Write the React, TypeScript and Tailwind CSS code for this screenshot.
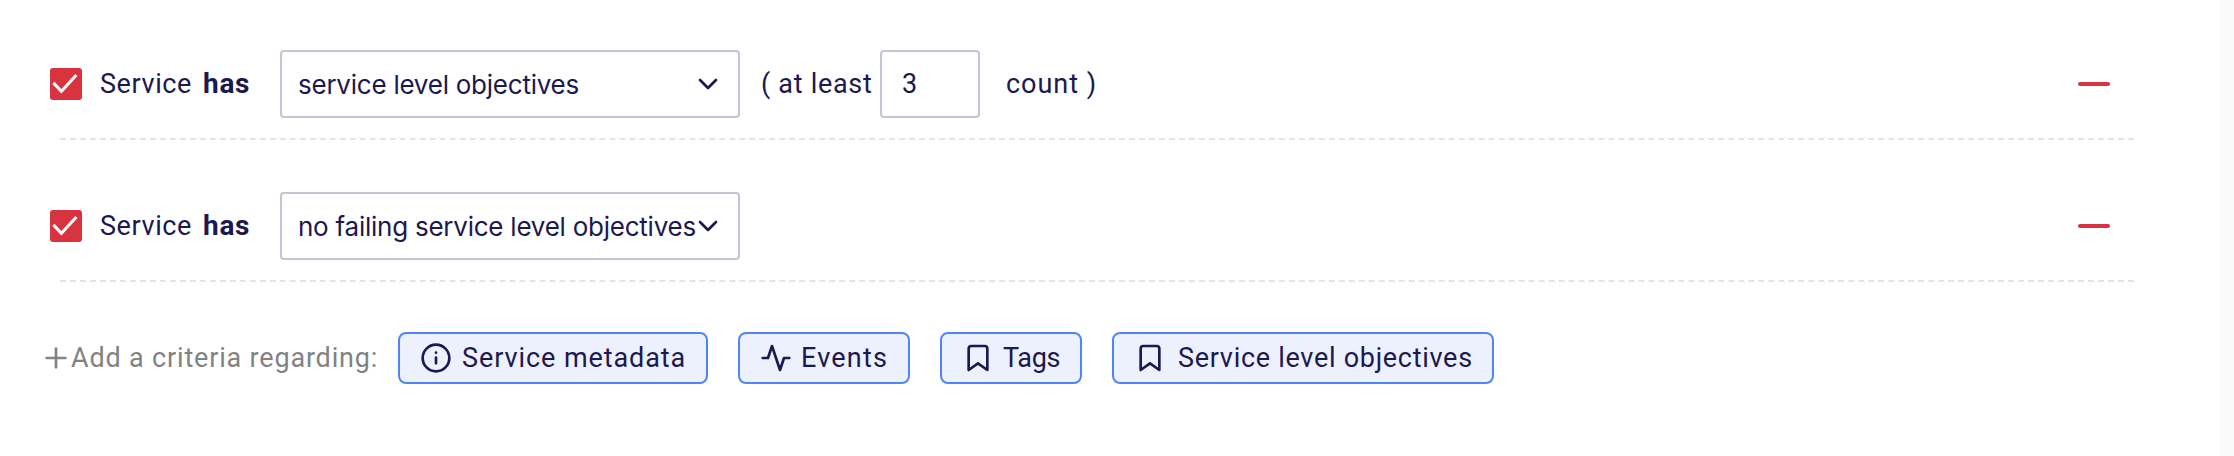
import type { ReactNode } from "react";

function Icon({ children, className = "" }: { children: ReactNode; className?: string }) {
  return (
    <svg viewBox="0 0 24 24" fill="none" stroke="currentColor" strokeWidth={2} strokeLinecap="round" strokeLinejoin="round" className={`size-8 shrink-0 ${className}`}>
      {children}
    </svg>
  );
}

const PlusIcon = () => <Icon><path d="M12 5v14M5 12h14" /></Icon>;
const ChevronIcon = () => <Icon className="-ml-8"><path d="m6 9 6 6 6-6" /></Icon>;
const InfoIcon = () => <Icon><circle cx="12" cy="12" r="10" /><path d="M12 16v-4.3M12 8h.01" /></Icon>;
const ActivityIcon = () => <Icon><path d="M22 12h-4l-3 9L9 3l-3 9H2" /></Icon>;
const BookmarkIcon = () => <Icon><path d="m19 21-7-5-7 5V5a2 2 0 0 1 2-2h10a2 2 0 0 1 2 2z" /></Icon>;

function Checkbox() {
  return (
    <span role="checkbox" aria-checked="true" className="size-8 shrink-0 rounded-[3px] bg-[#d73440]">
      <svg viewBox="0 0 32 32" fill="none" stroke="#fff" strokeWidth={3} className="size-8">
        <path d="M3.4 14.9 11.4 23.2 26.4 7.1" />
      </svg>
    </span>
  );
}

function Select({ value }: { value: string }) {
  return (
    <div className="flex h-[68px] w-[460px] shrink-0 items-center justify-between rounded-[4px] border-2 border-[#c6c3d6] pl-4 pr-3.5">
      <span className="pt-0.5 font-['Inter',sans-serif] text-[26px] tracking-[-0.24px]">{value}</span>
      <ChevronIcon />
    </div>
  );
}

function CriteriaRow({ value, children }: { value: string; children?: ReactNode }) {
  return (
    <div className="flex h-[142px] flex-col">
      <div className="flex h-[120px] items-end pl-[50px] pr-[110px]">
        <div className="flex h-[68px] w-full items-center">
          <Checkbox />
          <span className="ml-[18px] w-[102px] pb-px tracking-[0.59px]">Service</span>
          <b className="w-[78px] pb-px pl-px text-[28px] font-bold tracking-[0.7px]">has</b>
          <Select value={value} />
          {children}
          <span className="ml-auto h-1 w-8 rounded-full bg-[#d73440]" />
        </div>
      </div>
      <div className="ml-[60px] mr-[86px] mt-5 border-t-2 border-dashed border-[#e5e5e5]" />
    </div>
  );
}

function Chip({ icon, label, className }: { icon: ReactNode; label: string; className: string }) {
  return (
    <button className={`flex h-[52px] shrink-0 items-center rounded-lg border-2 border-[#4f86f7] bg-[#edf1fe] pl-5 text-[#1c1850] ${className}`}>
      {icon}
      <span className="pb-px">{label}</span>
    </button>
  );
}

export default function App() {
  return (
    <div className="flex h-[456px] w-[2234px] overflow-hidden whitespace-nowrap bg-[#fafafa] font-['Roboto',sans-serif] text-[27px] leading-[32px] text-[#1c1850]">
      <main className="w-[2220px] bg-white">
        <div className="-mt-0.5">
          <CriteriaRow value="service level objectives">
            <span className="ml-[21px] w-[119px] pb-px tracking-[0.7px]">( at least</span>
            <span className="flex h-[68px] w-[100px] items-center rounded-[4px] border-2 border-[#c6c3d6] pb-px pl-5">3</span>
            <span className="ml-[26px] pb-px tracking-[0.98px]">count )</span>
          </CriteriaRow>
          <CriteriaRow value="no failing service level objectives" />
        </div>
        <div className="mt-[50px] flex h-[52px] items-center pl-10">
          <span className="flex w-[358px] items-center text-[#828282]">
            <PlusIcon />
            <span className="-ml-px pb-px tracking-[0.82px]">Add a criteria regarding:</span>
          </span>
          <div className="flex gap-[30px]">
            <Chip icon={<InfoIcon />} label="Service metadata" className="w-[310px] gap-2.5 tracking-[0.92px]" />
            <Chip icon={<ActivityIcon />} label="Events" className="w-[172px] gap-[9px] tracking-[1.2px]" />
            <Chip icon={<BookmarkIcon />} label="Tags" className="w-[142px] gap-[9px] tracking-[-0.3px]" />
            <Chip icon={<BookmarkIcon />} label="Service level objectives" className="w-[382px] gap-3 tracking-[0.71px]" />
          </div>
        </div>
      </main>
    </div>
  );
}
